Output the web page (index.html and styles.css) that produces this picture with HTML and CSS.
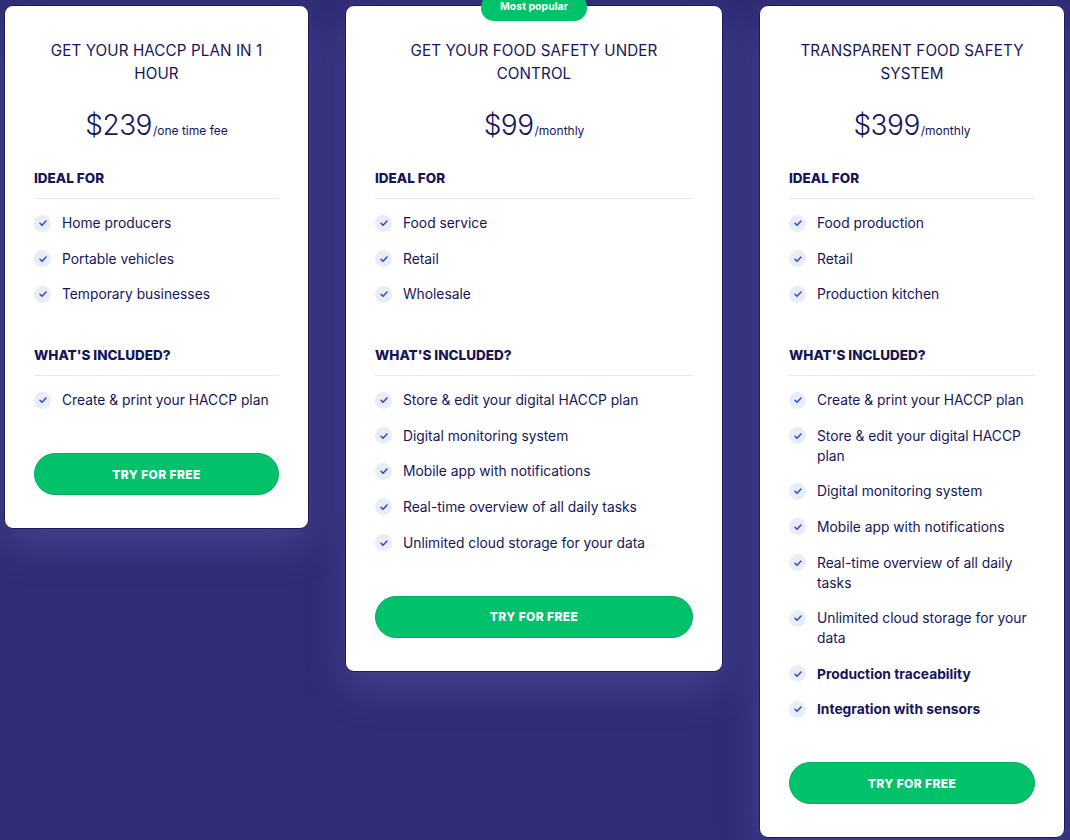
FILE: index.html
```html
<!DOCTYPE html>
<html lang="en">
<head>
<meta charset="utf-8">
<title>Pricing</title>
<link rel="stylesheet" href="styles.css">
</head>
<body>
<main class="plans">
  <section class="card card-basic">
    <h2 class="title">GET YOUR HACCP PLAN IN 1 HOUR</h2>
    <p class="price"><span class="amount">$239</span><span class="period">/one time fee</span></p>
    <h3 class="section-head">IDEAL FOR</h3>
    <ul class="list">
      <li><span class="check"><svg viewBox="0 0 16 16"><path d="M5 8.3l2 2 4-4.3"/></svg></span><span>Home producers</span></li>
      <li><span class="check"><svg viewBox="0 0 16 16"><path d="M5 8.3l2 2 4-4.3"/></svg></span><span>Portable vehicles</span></li>
      <li><span class="check"><svg viewBox="0 0 16 16"><path d="M5 8.3l2 2 4-4.3"/></svg></span><span>Temporary businesses</span></li>
    </ul>
    <h3 class="section-head spaced">WHAT'S INCLUDED?</h3>
    <ul class="list">
      <li><span class="check"><svg viewBox="0 0 16 16"><path d="M5 8.3l2 2 4-4.3"/></svg></span><span>Create &amp; print your HACCP plan</span></li>
    </ul>
    <a class="btn" href="#">TRY FOR FREE</a>
  </section>

  <section class="card card-popular">
    <span class="badge">Most popular</span>
    <h2 class="title">GET YOUR FOOD SAFETY UNDER CONTROL</h2>
    <p class="price"><span class="amount">$99</span><span class="period">/monthly</span></p>
    <h3 class="section-head">IDEAL FOR</h3>
    <ul class="list">
      <li><span class="check"><svg viewBox="0 0 16 16"><path d="M5 8.3l2 2 4-4.3"/></svg></span><span>Food service</span></li>
      <li><span class="check"><svg viewBox="0 0 16 16"><path d="M5 8.3l2 2 4-4.3"/></svg></span><span>Retail</span></li>
      <li><span class="check"><svg viewBox="0 0 16 16"><path d="M5 8.3l2 2 4-4.3"/></svg></span><span>Wholesale</span></li>
    </ul>
    <h3 class="section-head spaced">WHAT'S INCLUDED?</h3>
    <ul class="list">
      <li><span class="check"><svg viewBox="0 0 16 16"><path d="M5 8.3l2 2 4-4.3"/></svg></span><span>Store &amp; edit your digital HACCP plan</span></li>
      <li><span class="check"><svg viewBox="0 0 16 16"><path d="M5 8.3l2 2 4-4.3"/></svg></span><span>Digital monitoring system</span></li>
      <li><span class="check"><svg viewBox="0 0 16 16"><path d="M5 8.3l2 2 4-4.3"/></svg></span><span>Mobile app with notifications</span></li>
      <li><span class="check"><svg viewBox="0 0 16 16"><path d="M5 8.3l2 2 4-4.3"/></svg></span><span>Real-time overview of all daily tasks</span></li>
      <li><span class="check"><svg viewBox="0 0 16 16"><path d="M5 8.3l2 2 4-4.3"/></svg></span><span>Unlimited cloud storage for your data</span></li>
    </ul>
    <a class="btn" href="#">TRY FOR FREE</a>
  </section>

  <section class="card card-pro">
    <h2 class="title">TRANSPARENT FOOD SAFETY SYSTEM</h2>
    <p class="price"><span class="amount">$399</span><span class="period">/monthly</span></p>
    <h3 class="section-head">IDEAL FOR</h3>
    <ul class="list">
      <li><span class="check"><svg viewBox="0 0 16 16"><path d="M5 8.3l2 2 4-4.3"/></svg></span><span>Food production</span></li>
      <li><span class="check"><svg viewBox="0 0 16 16"><path d="M5 8.3l2 2 4-4.3"/></svg></span><span>Retail</span></li>
      <li><span class="check"><svg viewBox="0 0 16 16"><path d="M5 8.3l2 2 4-4.3"/></svg></span><span>Production kitchen</span></li>
    </ul>
    <h3 class="section-head spaced">WHAT'S INCLUDED?</h3>
    <ul class="list">
      <li><span class="check"><svg viewBox="0 0 16 16"><path d="M5 8.3l2 2 4-4.3"/></svg></span><span>Create &amp; print your HACCP plan</span></li>
      <li><span class="check"><svg viewBox="0 0 16 16"><path d="M5 8.3l2 2 4-4.3"/></svg></span><span>Store &amp; edit your digital HACCP plan</span></li>
      <li><span class="check"><svg viewBox="0 0 16 16"><path d="M5 8.3l2 2 4-4.3"/></svg></span><span>Digital monitoring system</span></li>
      <li><span class="check"><svg viewBox="0 0 16 16"><path d="M5 8.3l2 2 4-4.3"/></svg></span><span>Mobile app with notifications</span></li>
      <li><span class="check"><svg viewBox="0 0 16 16"><path d="M5 8.3l2 2 4-4.3"/></svg></span><span>Real-time overview of all daily tasks</span></li>
      <li><span class="check"><svg viewBox="0 0 16 16"><path d="M5 8.3l2 2 4-4.3"/></svg></span><span>Unlimited cloud storage for your data</span></li>
      <li class="strong"><span class="check"><svg viewBox="0 0 16 16"><path d="M5 8.3l2 2 4-4.3"/></svg></span><span>Production traceability</span></li>
      <li class="strong"><span class="check"><svg viewBox="0 0 16 16"><path d="M5 8.3l2 2 4-4.3"/></svg></span><span>Integration with sensors</span></li>
    </ul>
    <a class="btn" href="#">TRY FOR FREE</a>
  </section>
</main>
</body>
</html>
```
FILE: styles.css
```css
* { box-sizing: border-box; }

html, body {
  margin: 0;
  height: 100%;
}

body {
  background: #302d76;
  font-family: "Inter", "Roboto", "Liberation Sans", sans-serif;
  color: #16155a;
  overflow: hidden;
}

.plans {
  display: grid;
  grid-template-columns: 305px 378px 306px;
  column-gap: 36px;
  align-items: start;
  padding: 5px 0 0 4px;
}

.card {
  position: relative;
  background: #ffffff;
  border: 1px solid #1d1a5c;
  border-radius: 9px;
  padding: 33px 29px 33px;
  display: flex;
  flex-direction: column;
  box-shadow: 0 18px 40px rgba(140, 130, 230, 0.22);
}

.badge {
  position: absolute;
  top: -12px;
  left: 50%;
  transform: translateX(-50%);
  width: 106px;
  height: 27px;
  padding-top: 6px;
  border-radius: 13px;
  background: #00c26b;
  color: #ffffff;
  font-size: 10.5px;
  font-weight: 700;
  text-align: center;
  line-height: 14px;
}

.title {
  margin: 0;
  padding: 0 8px;
  text-align: center;
  font-size: 15.2px;
  line-height: 23px;
  font-weight: 400;
  letter-spacing: 0.1px;
}

.price {
  margin: 20px 0 0;
  text-align: center;
  line-height: 40px;
  white-space: nowrap;
}

.amount {
  font-size: 28px;
  font-weight: 300;
  letter-spacing: -0.5px;
}

.period {
  font-size: 12px;
  margin-left: 1px;
}

.section-head {
  margin: 17px 0 0;
  padding-bottom: 10px;
  border-bottom: 1px solid #e7e7ee;
  font-size: 13.5px;
  line-height: 20px;
  font-weight: 800;
}

.section-head.spaced {
  margin-top: 41px;
}

.list {
  list-style: none;
  margin: 14px 0 0;
  padding: 0;
  display: flex;
  flex-direction: column;
  gap: 15.6px;
}

.list li {
  display: flex;
  align-items: flex-start;
  gap: 11px;
  font-size: 13.8px;
  line-height: 20px;
}

.list li.strong {
  font-weight: 700;
}

.check {
  flex: none;
  width: 17px;
  height: 17px;
  margin-top: 1.5px;
  border-radius: 50%;
  background: #e9edf8;
  display: flex;
  align-items: center;
  justify-content: center;
}

.check svg {
  width: 16px;
  height: 16px;
  fill: none;
  stroke: #2a52cf;
  stroke-width: 1.6;
  stroke-linecap: round;
  stroke-linejoin: round;
}

.btn {
  margin-top: 43px;
  height: 42px;
  border-radius: 21px;
  background: #01c16b;
  border: 1px solid #0aae60;
  color: #ffffff;
  text-decoration: none;
  font-size: 12px;
  font-weight: 800;
  letter-spacing: 0.4px;
  display: flex;
  align-items: center;
  justify-content: center;
}
```
